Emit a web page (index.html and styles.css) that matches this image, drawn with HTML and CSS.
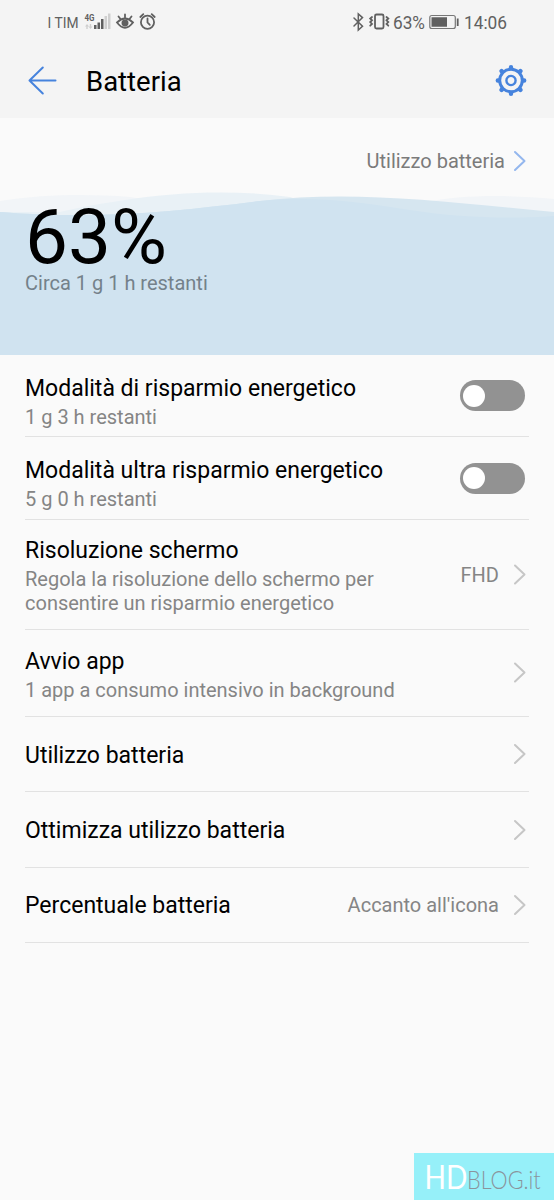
FILE: index.html
```html
<!DOCTYPE html>
<html lang="it">
<head>
<meta charset="utf-8">
<title>Batteria</title>
<link rel="stylesheet" href="styles.css">
</head>
<body>
<div class="screen">
  <div class="status">
    <svg class="status-icons" width="554" height="44" viewBox="0 0 554 44">
      <g class="status-text">
        <text x="47.500" y="27.500" font-size="15" textLength="31" lengthAdjust="spacingAndGlyphs">I TIM</text>
        <text x="84.500" y="21" font-size="9" font-weight="700" textLength="10" lengthAdjust="spacingAndGlyphs">4G</text>
        <text x="393" y="28.500" font-size="18" textLength="32" lengthAdjust="spacingAndGlyphs">63%</text>
        <text x="464" y="28.500" font-size="18" textLength="43" lengthAdjust="spacingAndGlyphs">14:06</text>
      </g>
      <g fill="#606060">
        <rect x="94" y="25" width="2.500" height="4"/>
        <rect x="97.500" y="22.500" width="2.500" height="6.500"/>
        <rect x="101" y="19" width="2.500" height="10"/>
      </g>
      <g fill="#cfcfcf">
        <rect x="104.500" y="16" width="2.500" height="13"/>
        <rect x="108" y="13.500" width="2.500" height="15.500"/>
        <path d="M85 26.500l2-2.500 2 2.500h-1.300v2.500h-1.400v-2.500zM88.500 26.500h1.300V24h1.400v2.500h1.300l-2 2.500z"/>
      </g>
      <g fill="none" stroke="#606060" stroke-width="1.800" stroke-linecap="round">
        <path d="M117 22.500Q125 14.500 133 22.500Q125 33 117 22.500Z"/>
        <path d="M118.500 16.500l2 2.500M125 14.500v3M131.500 16.500l-2 2.500"/>
        <circle cx="125" cy="23" r="2.600" fill="#606060"/>
        <circle cx="147.500" cy="22.200" r="6.600"/>
        <path d="M147.500 18.500v4l2.300 2.300M140.300 17l3-2.800M154.700 17l-3-2.800"/>
        <path d="M354 18l8.500 8.300L358.300 30V14l4.200 3.600L354 26" stroke-width="1.500"/>
        <rect x="375" y="14.500" width="8.500" height="14" rx="1.500"/>
        <path d="M372 17l-1.800 1.500 1.800 1.800-1.800 1.800 1.800 1.800-1.800 1.800M386.500 17l1.800 1.500-1.800 1.800 1.800 1.800-1.800 1.800 1.800 1.800" stroke-width="1.800"/>
        <rect x="429.800" y="15.500" width="25.500" height="13" rx="2" stroke="#777" stroke-width="1.200"/>
      </g>
      <path fill="#606060" d="M431.500 17.300H447v9.500H431.500zM456.800 18.500h1.800v7.500H456.800z"/>
    </svg>
  </div>
  <header class="bar">
    <svg class="back" width="30" height="30" viewBox="0 0 30 30"><path d="M27.500 14.500H1.500M14.800 1.500L1.500 14.500 14.800 27.500"/></svg>
    <h1>Batteria</h1>
    <svg class="gear" width="32" height="32" viewBox="-16 -15.500 32 32">
      <circle r="11.300"/><circle r="4.600" stroke-width="2.400"/>
      <g class="teeth">
        <path d="M0-12.500V-13.200M0 12.500V13.200M-12.500 0H-13.200M12.500 0H13.200M8.800-8.800l.6-.6M-8.800-8.800l-.6-.6M8.800 8.800l.6.600M-8.800 8.800l-.6.600"/>
      </g>
    </svg>
  </header>
  <section class="hero">
    <svg class="waves" width="554" height="237" viewBox="0 118 554 237">
      <path fill="#f2f5f8" d="M0 201C45 194 90 194 130 197L240 215H0ZM420 203C465 194 510 195 554 199V235H400Z"/>
      <path fill="#e9f1f6" d="M0 212H60C80 207 105 203 125 200C180 191 240 190 290 197L400 235H0Z"/>
      <path fill="#d6e6f0" d="M0 212C100 220 180 211 260 201C350 190 440 201 554 212V355H0Z"/>
      <path fill="#d0e3f0" d="M0 212C100 220 180 211 260 201C320 195 370 204 410 210C460 218 510 219 554 216V355H0Z"/>
    </svg>
    <div class="usage"><span>Utilizzo batteria</span><svg class="chevron blue" width="14" height="22" viewBox="0 0 14 22"><path d="M2 2l9.500 9L2 20"/></svg></div>
    <div class="level">63%</div>
    <div class="remaining">Circa 1 g 1 h restanti</div>
  </section>
  <main class="list">
    <div class="row saver"><div class="copy"><h2>Modalità di risparmio energetico</h2><p>1 g 3 h restanti</p></div><span class="toggle"></span></div>
    <div class="row ultra"><div class="copy"><h2>Modalità ultra risparmio energetico</h2><p>5 g 0 h restanti</p></div><span class="toggle"></span></div>
    <div class="row resolution"><div class="copy"><h2>Risoluzione schermo</h2><p>Regola la risoluzione dello schermo per<br>consentire un risparmio energetico</p></div><span class="value">FHD</span><svg class="chevron" width="14" height="22" viewBox="0 0 14 22"><path d="M2 1.500l9.500 9L2 19.500"/></svg></div>
    <div class="row launch"><div class="copy"><h2>Avvio app</h2><p>1 app a consumo intensivo in background</p></div><svg class="chevron" width="14" height="22" viewBox="0 0 14 22"><path d="M2 1.500l9.500 9L2 19.500"/></svg></div>
    <div class="row single"><div class="copy"><h2>Utilizzo batteria</h2></div><svg class="chevron" width="14" height="22" viewBox="0 0 14 22"><path d="M2 2l9.500 9L2 20"/></svg></div>
    <div class="row single"><div class="copy"><h2>Ottimizza utilizzo batteria</h2></div><svg class="chevron" width="14" height="22" viewBox="0 0 14 22"><path d="M2 2l9.500 9L2 20"/></svg></div>
    <div class="row single"><div class="copy"><h2>Percentuale batteria</h2></div><span class="value">Accanto all'icona</span><svg class="chevron" width="14" height="22" viewBox="0 0 14 22"><path d="M2 2l9.500 9L2 20"/></svg></div>
  </main>
  <footer class="brand">
    <svg width="140" height="47" viewBox="0 0 140 47">
      <text transform="translate(10.500 35.500) scale(.88 1)" class="brand-hd">HD</text>
      <text transform="translate(53 35.500) scale(.83 1)" class="brand-blog">BLOG.it</text>
    </svg>
  </footer>
</div>
</body>
</html>
```
FILE: styles.css
```css
* { box-sizing: border-box; }
body { margin: 0; font-family: Roboto, sans-serif; color: #000; }
h1, h2, p { margin: 0; font-weight: 400; }
.screen { width: 554px; height: 1200px; display: flex; flex-direction: column; background: #fafafa; overflow: hidden; }
.status { height: 44px; background: #f4f4f4; }
.status-icons { display: block; }
.status-text { fill: #606060; }
.bar { height: 74px; padding: 0 27px 0 28px; display: flex; align-items: center; background: #f4f4f4; }
.back { fill: none; stroke: #4683dd; stroke-width: 2; stroke-linecap: round; stroke-linejoin: round; }
.bar h1 { flex: 1; padding: 2px 0 0 28px; font-size: 27.5px; line-height: 32px; }
.gear { fill: none; stroke: #4683dd; stroke-width: 3; }
.teeth { stroke-width: 4.4; stroke-linecap: round; }
.hero { height: 237px; position: relative; padding: 31px 27px 0 25px; }
.waves { position: absolute; left: 0; top: 0; }
.usage, .level, .remaining { position: relative; }
.usage { display: flex; justify-content: flex-end; align-items: center; height: 24px; font-size: 20px; color: #7b7b7b; }
.chevron { flex: none; margin-left: 14px; fill: none; stroke: #c6c6c6; stroke-width: 2; stroke-linecap: round; stroke-linejoin: round; }
.usage .chevron { margin-left: 8px; }
.blue { stroke: #94b7ee; }
.level { margin-top: 22px; height: 76px; font-size: 76.5px; line-height: 84px; }
.remaining { font-size: 20px; line-height: 24px; color: #74818a; }
.list { padding: 0 25px; }
.row { display: flex; align-items: center; border-bottom: 1px solid #e2e2e2; }
.copy { flex: 1; white-space: nowrap; }
.row h2 { font-size: 23px; line-height: 28px; }
.row p { margin-top: 2px; font-size: 20px; line-height: 24px; color: #858585; }
.value { font-size: 20px; line-height: 24px; color: #858585; }
.row .chevron { margin-right: 2px; }
.saver { height: 82px; padding-top: 13px; }
.ultra { height: 83px; padding-top: 12px; }
.saver .toggle { margin-bottom: 13px; }
.ultra .toggle { margin-bottom: 12px; }
.resolution .copy, .launch .copy { padding-top: 3px; }
.resolution { height: 110px; }
.launch { height: 87px; }
.single { height: 75.4px; }
.single .copy { padding-top: 3px; }
.single .value { padding-top: 1px; }
.toggle { width: 65px; height: 31px; margin-right: 4px; padding: 4.5px 3px; border-radius: 16px; background: #929292; }
.toggle::before { content: ""; display: block; width: 22px; height: 22px; border-radius: 50%; background: #fff; }
.brand { width: 140px; height: 47px; margin: auto 0 0 auto; background: #96f0f9; }
.brand svg { display: block; }
.brand-hd { font: 400 32px Lato, sans-serif; fill: #fff; }
.brand-blog { font: 300 26px Lato, sans-serif; fill: #8a949c; }
```
